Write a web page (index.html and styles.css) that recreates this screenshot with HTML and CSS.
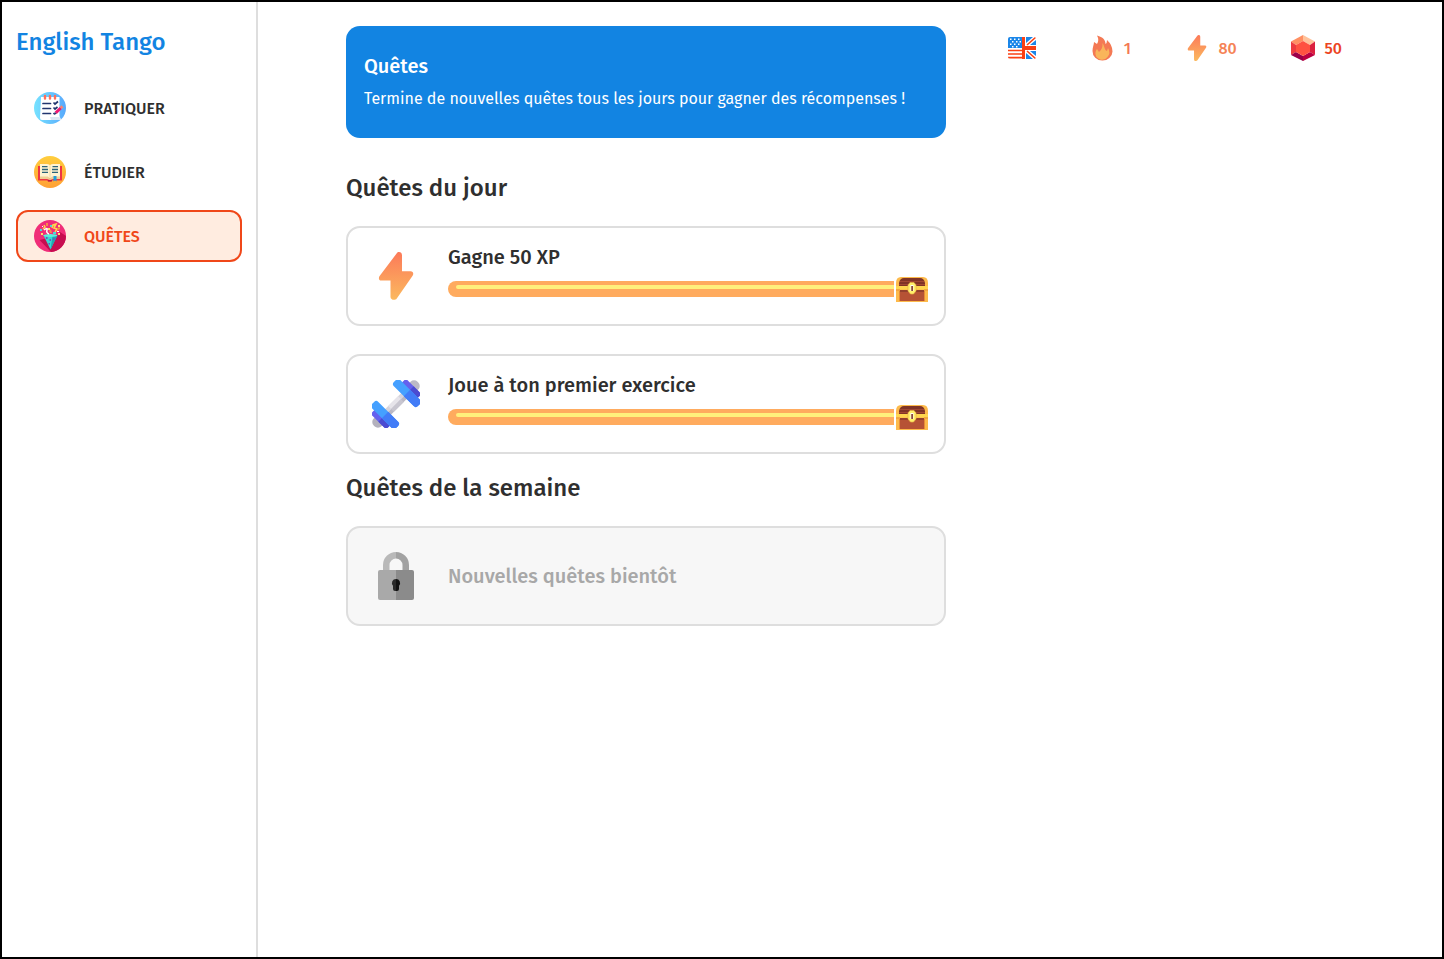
FILE: index.html
```html
<!DOCTYPE html>
<html lang="fr">
<head>
<meta charset="utf-8">
<meta name="viewport" content="width=device-width, initial-scale=1">
<title>English Tango</title>
<link rel="stylesheet" href="styles.css">
</head>
<body>
<svg class="defs" width="0" height="0" aria-hidden="true">
  <defs>
    <linearGradient id="heat" x1="0" y1="0" x2="0" y2="1"><stop offset="0" stop-color="#fc7a59"/><stop offset="1" stop-color="#fbb95f"/></linearGradient>
    <linearGradient id="sky" x1="0" y1="0" x2="1" y2="0"><stop offset="0" stop-color="#76e2ff"/><stop offset="1" stop-color="#58a9fc"/></linearGradient>
    <linearGradient id="sun" x1="0" y1="0" x2="0" y2="1"><stop offset="0" stop-color="#ffce3d"/><stop offset="1" stop-color="#ffa034"/></linearGradient>
    <symbol id="bolt" viewBox="0 0 48 48">
      <path fill="url(#heat)" d="M24.600 1.500C26.300-1 30 .1 30 3.200V19.200H38.600C41 19.200 42 21.700 40.600 23.700L24.800 46.400C23.100 48.900 18.500 48 18.500 45V28.600H9.300C6.900 28.600 6.200 26 7.600 24Z"/>
    </symbol>
    <symbol id="chest" viewBox="0 0 32 25">
      <path fill="#fdba4b" d="M0 25V6Q0 0 5 0H27Q32 0 32 6V25Z"/>
      <path fill="#803426" d="M3 9V6Q4 1 8 1H24Q28 1 29 6V9Z"/>
      <path stroke="#a14732" d="M4 4.500h24M3 7.500h26"/>
      <path fill="#b65235" d="M4 14h24v10H4z"/><path fill="#94402d" d="M4 13h24v2H4z"/>
      <path fill="#ffd64e" d="M0 9h32v3.500H0z"/>
      <path fill="#e88c37" d="M0 12.500h4v1H0zM28 12.500h4v1h-4zM3 14h1v10H3zM28 14h1v10h-1z"/>
      <path fill="#fff06b" stroke="#eab545" stroke-width=".7" d="M14 5.500h4l2 2.500v6L17.500 17h-3L12 14V8Z"/>
      <path fill="#fff" d="M14.500 8h3v6h-3z"/><path fill="#7d3525" d="M15.300 9h1.600v5h-1.600z"/>
    </symbol>
  </defs>
</svg>
<div class="app">
  <aside class="sidebar">
    <h1 class="brand">English Tango</h1>
    <nav class="nav">
      <a class="nav-link" href="#pratiquer">
        <svg class="nav-icon" viewBox="0 0 32 32" aria-hidden="true">
          <circle cx="16" cy="16" r="16" fill="url(#sky)"/>
          <path fill="#fff" d="M7 5H25.500V24L27 28H8Q6 28 6 26Z"/><path fill="#dbe7f3" d="M16 25h9.500l1.500 3h-10z"/>
          <path stroke="#ff705b" stroke-width="2.400" stroke-linecap="round" d="M11 4v2.500M16 4v2.500M21 4v2.500"/>
          <path stroke="#22366f" stroke-width="1.700" stroke-linecap="round" d="M9 11.500h7.500M9 16.500h7.500M9 21.500h7.500"/>
          <path fill="none" stroke="#22366f" stroke-width="1.700" d="m19.500 10.500 1.500 1.500 3-2.500M19.500 15.500l1.500 1.500 2.500-2M19.500 21l1 1"/>
          <path stroke="#ed1974" stroke-width="3" d="m21.700 20.800 5-4.800"/><path stroke="#ff806d" stroke-width="3" d="m26.700 16 1.800-1.600"/><path fill="#22366f" d="m20 23 .8-3 1.800 1.800z"/>
        </svg>
        <span>PRATIQUER</span>
      </a>
      <a class="nav-link" href="#etudier">
        <svg class="nav-icon" viewBox="0 0 32 32" aria-hidden="true">
          <circle cx="16" cy="16" r="16" fill="url(#sun)"/>
          <path fill="#ee3444" d="M4 10h24v14.500H18l-1 1h-3l-1-1H4Z"/><path fill="#bb1c3e" d="M14 24h4v1.500h-4z"/>
          <path fill="#fff3d1" d="M6 8h7q3 0 3 2 0-2 3-2h7v14H6Z"/><path fill="#f0cf94" d="M6 20.500h8l2 2 2-2h8V23h-7l-3 1-3-1H6Z"/>
          <path stroke="#f3dca4" d="M16 10v12"/>
          <path stroke="#2b6379" stroke-width="1.300" d="M8 10.700h5.500M8 13.500h6M8 16.300h6M18.500 10.700h5.500M18 13.500h6M18 16.300h6"/>
          <path fill="#209bd8" d="M19.500 20h3v5.500L21 24.200l-1.500 1.300Z"/>
        </svg>
        <span>ÉTUDIER</span>
      </a>
      <a class="nav-link nav-link--active" href="#quetes" aria-current="page">
        <svg class="nav-icon" viewBox="0 0 32 32" aria-hidden="true">
          <circle cx="16" cy="16" r="16" fill="#f02d78"/>
          <path fill="#c60d50" d="m22.500 16 3.500-4 6 4A16 16 0 0 1 17 32l-11.500-12Z"/>
          <path fill="#3ad8d2" d="M9.300 15H23.300L16.500 29.500Z"/><path fill="#22a5ae" d="M18.500 16h4.800l-6.800 13.500z"/>
          <path fill="#6a55c4" d="M12 17h1.500v2H12zM15.500 19H17v2h-1.500zM14.500 23H16v1.500h-1.500zM19 18h1.500v2H19z"/><ellipse cx="16.300" cy="15.500" rx="7" ry="1.500" fill="#5df0dc"/>
          <path fill="none" stroke="#ffd34f" stroke-width="1.600" d="m18 8 1-3 3-1-2 4 3 1-2 3M10 5l1 2-2 2"/>
          <path fill="none" stroke="#fff" stroke-width="1.500" d="M10 10q4-3 3 0t2 4"/>
          <path fill="#f8884f" d="M12 3h2v3h-2zM23 8l3-1v2l-3 2zM15 11l2-2 1 4h-2z"/><path fill="#49ded3" d="M6 9h2v2H6zM16 5h2v2h-2zM19 12h3v2h-3z"/>
          <path fill="#ffe36c" d="M7 13h2v2H7zM24 13h2v2h-2zM14 8h2v2h-2zM24 5h2v2h-2z"/><path fill="#fff" d="M23 11h2v1h-2zM8 6h1v1H8z"/>
        </svg>
        <span>QUÊTES</span>
      </a>
    </nav>
  </aside>
  <div class="page">
    <div class="layout">
      <main class="content">
        <header class="banner">
          <h2 class="banner-title">Quêtes</h2>
          <p class="banner-text">Termine de nouvelles quêtes tous les jours pour gagner des récompenses !</p>
        </header>
        <section class="group">
          <h2 class="group-title">Quêtes du jour</h2>
          <div class="quests">
            <article class="quest">
              <svg class="quest-icon" aria-hidden="true"><use href="#bolt"/></svg>
              <div class="quest-body">
                <h3 class="quest-title">Gagne 50 XP</h3>
                <div class="goal">
                  <div class="bar" role="progressbar" aria-label="Gagne 50 XP" aria-valuenow="100" aria-valuemin="0" aria-valuemax="100"><div class="shine"></div></div>
                  <svg class="chest" aria-hidden="true"><use href="#chest"/></svg>
                </div>
              </div>
            </article>
            <article class="quest">
              <svg class="quest-icon" viewBox="0 0 48 48" aria-hidden="true">
                <g transform="rotate(-45 24 24)">
                  <rect x="-7" y="18.500" width="14" height="11" rx="5" fill="#b3b1bd"/><rect x="41" y="18.500" width="14" height="11" rx="5" fill="#bcbac6"/>
                  <path fill="#d6d4dc" d="M10 20h28v4H10z"/><path fill="#bab8c4" d="M10 24h28v4H10z"/><path fill="#e6e4ea" d="M17 20h14v4H17z"/><path fill="#c8c6d0" d="M17 24h14v4H17z"/>
                  <rect x="-1" y="13" width="9" height="22" rx="3" fill="#6560ee"/><path fill="#4b4bd1" d="M-1 24h9v11h-6q-3 0-3-3z"/>
                  <rect x="4" y="7" width="9" height="34" rx="3" fill="#45a0ff"/><path fill="#427cf7" d="M4 24h9v14q0 3-3 3H7q-3 0-3-3z"/>
                  <rect x="40" y="13" width="9" height="22" rx="3" fill="#6560ee"/><path fill="#4b4bd1" d="M40 24h9v8q0 3-3 3h-6z"/>
                  <rect x="35" y="7" width="9" height="34" rx="3" fill="#45a0ff"/><path fill="#427cf7" d="M35 24h9v14q0 3-3 3h-3q-3 0-3-3z"/>
                </g>
              </svg>
              <div class="quest-body">
                <h3 class="quest-title">Joue à ton premier exercice</h3>
                <div class="goal">
                  <div class="bar" role="progressbar" aria-label="Joue à ton premier exercice" aria-valuenow="100" aria-valuemin="0" aria-valuemax="100"><div class="shine"></div></div>
                  <svg class="chest" aria-hidden="true"><use href="#chest"/></svg>
                </div>
              </div>
            </article>
          </div>
        </section>
        <section class="group">
          <h2 class="group-title">Quêtes de la semaine</h2>
          <article class="quest quest--locked">
            <svg class="quest-icon" viewBox="0 0 48 48" aria-hidden="true">
              <path fill="#b9b9b9" d="M11 20V13A13 13 0 0 1 24 0V6.500A6.500 6.500 0 0 0 17.500 13V20Z"/><path fill="#a2a2a2" d="M37 20V13A13 13 0 0 0 24 0V6.500A6.500 6.500 0 0 1 30.500 13V20Z"/>
              <path fill="#a9a9a9" d="M24 18H8Q6 18 6 20V46Q6 48 8 48H24Z"/><path fill="#8b8b8b" d="M24 18H40Q42 18 42 20V46Q42 48 40 48H24Z"/>
              <path fill="#292929" d="M24 27a4 4 0 0 0-3 6.700V37q0 2 2 2h1Z"/><path fill="#111" d="M24 27a4 4 0 0 1 3 6.700V37q0 2-2 2h-1Z"/>
            </svg>
            <h3 class="quest-title">Nouvelles quêtes bientôt</h3>
          </article>
        </section>
      </main>
      <aside class="stats" aria-label="Statistiques">
        <svg class="stat-icon" viewBox="0 0 28 28" role="img" aria-label="Anglais">
          <clipPath id="flag"><rect y="3" width="28" height="22" rx="2"/></clipPath>
          <g clip-path="url(#flag)">
            <path fill="#fff" d="M0 3h28v22H0z"/><path fill="#1b86e8" d="M0 3h14v11H0z"/>
            <path fill="#fff" d="M2 4.500h1.500V6H2zM6 4.500h1.500V6H6zM10 4.500h1.500V6H10zM4 7h1.500v1.500H4zM8 7h1.500v1.500H8zM11.500 7H13v1.500h-1.500zM2 9.500h1.500V11H2zM6 9.500h1.500V11H6zM10 9.500h1.500V11H10zM4 12h1.500v1.500H4zM8 12h1.500v1.500H8z"/>
            <path stroke="#fa4014" stroke-width="1.700" d="M0 16.500h14M0 20h14M0 23.700h14"/>
            <path fill="#1b86e8" d="M18 3h7l-7 6zM28 6v5h-6zM28 17v5l-6-5zM18 19l7 6h-7z"/>
            <path stroke="#fa4014" stroke-width="1.500" d="m19 11 9-8M19 17l9 8"/><path fill="#fa4014" d="M14 3h3v9h11v4H17v9h-3z"/>
          </g>
        </svg>
        <div class="stat">
          <svg class="stat-icon" viewBox="-1 0 28 28" aria-hidden="true">
            <path fill="#f47954" d="M8 1.500C14 3 16.500 6 16.500 10q1.500-1 1.500-4 5.500 5 5.500 11.500A10 9.300 0 0 1 3.500 17C3.500 13 5 10.500 5 8l3 2Q10.500 6 8 1.500Z"/>
            <path fill="#f9b55a" d="M13.500 9C16 13 15 15.500 18 17l1-3q3 5-.5 9a6.700 6.700 0 0 1-12-5q.5-2 1.500-3l2 3q4-3 3.500-9Z"/>
          </svg>
          <span class="streak">1</span>
        </div>
        <div class="stat"><svg class="stat-icon" viewBox="0 0 28 28" aria-hidden="true"><use href="#bolt" x="1" y="1" width="26" height="26"/></svg><span class="xp">80</span></div>
        <div class="stat">
          <svg class="stat-icon" viewBox="-1 0 28 28" aria-hidden="true">
            <path fill="#ff9063" d="M14 1 2 7.500 7 11l7-4Z"/><path fill="#ffc29b" d="m14 1 12 6.500L21 11l-7-4Z"/>
            <path fill="#ed3b40" d="M2 7.500V21l5-3v-7Z"/><path fill="#db203e" d="M26 7.500V21l-5-3v-7Z"/>
            <path fill="#9b0049" d="m2 21 12 6v-5l-7-4Z"/><path fill="#bc0041" d="m26 21-12 6v-5l7-4Z"/><path fill="#ff5241" d="m14 7 7 4v7l-7 4-7-4v-7Z"/>
          </svg>
          <span class="gems">50</span>
        </div>
      </aside>
    </div>
  </div>
</div>
</body>
</html>
```
FILE: styles.css
```css
* { box-sizing: border-box; }
body, h1, h2, h3, p { margin: 0; }
body {
  color: #2f2f2f;
  background: #fff;
  font-family: "Fira Sans", "Noto Sans", "Open Sans", sans-serif;
  font-size: 16px;
  line-height: 25px;
}
h1, h2, h3 { font-weight: 500; }
svg { display: block; flex-shrink: 0; }
.defs { position: absolute; }
.app { display: flex; min-height: 100vh; border: 2px solid #000; }
.sidebar { width: 256px; flex-shrink: 0; padding: 24px 14px; border-right: 2px solid #dedede; }
.brand { color: #1284e2; font-size: 24px; line-height: 32px; }
.nav { display: flex; flex-direction: column; gap: 12px; margin-top: 24px; }
.nav-link {
  display: flex; align-items: center; gap: 18px;
  padding: 8px 16px;
  border: 2px solid transparent; border-radius: 12px;
  color: #2f2f2f; font-weight: 500; text-decoration: none;
}
.nav-link--active { color: #f04719; border-color: #f04719; background: #ffece0; }
.nav-icon { width: 32px; height: 32px; }
.page { flex: 1; min-width: 0; padding: 24px; }
.layout { display: flex; gap: 48px; max-width: 1008px; margin: 0 auto; }
.content { flex: 0 1 600px; min-width: 0; }
.banner { padding: 24px 18px 23px; border-radius: 14px; color: #fff; background: #1284e2; }
.banner-title { font-size: 20px; line-height: 32px; }
.banner-text { line-height: 33px; }
.group { padding-top: 16px; }
.banner + .group { padding-top: 32px; }
.group-title { margin-bottom: 20px; font-size: 24px; line-height: 36px; }
.quests { display: flex; flex-direction: column; gap: 28px; }
.quest {
  display: flex; align-items: center; gap: 28px;
  min-height: 100px; padding: 16px 16px 16px 24px;
  border: 2px solid #dedede; border-radius: 14px;
}
.quest--locked { color: #a8a8a8; background: #f7f7f7; }
.quest-icon { width: 48px; height: 48px; }
.quest-body { flex: 1; min-width: 0; padding-bottom: 6px; }
.quest-title { font-size: 20px; line-height: 24px; }
.goal { display: flex; align-items: center; gap: 2px; margin-top: 8px; }
.bar { flex: 1; height: 16px; padding: 4px 0 0 8px; border-radius: 8px 0 0 8px; background: #ffab5e; }
.shine { height: 4px; border-radius: 2px 0 0 2px; background: #fff07c; }
.chest { width: 32px; height: 25px; }
.stats { flex: 1; display: flex; align-items: center; align-self: flex-start; justify-content: space-between; padding: 8px 12px 8px 14px; }
.stat { display: flex; align-items: center; gap: 8px; font-weight: 500; }
.stat-icon { width: 28px; height: 28px; }
.streak { color: #f47954; }
.xp { color: #f58356; }
.gems { color: #ec451f; }
```
